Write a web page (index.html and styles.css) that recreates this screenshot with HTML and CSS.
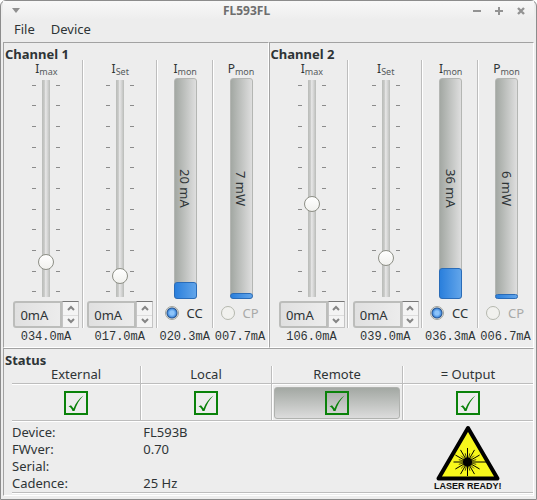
FILE: index.html
```html
<!DOCTYPE html>
<html lang="en">
<head>
<meta charset="utf-8">
<title>FL593FL</title>
<link rel="stylesheet" href="styles.css">
</head>
<body>
<div class="window">
  <header class="titlebar">
    <button class="win-btn" aria-label="Window menu"><svg width="8" height="5" viewBox="0 0 8 5"><path d="M0 0h8L4 5z" fill="#8f8f8f"/></svg></button>
    <h1>FL593FL</h1>
    <div class="win-actions">
      <button class="win-btn" aria-label="Minimize"><svg width="8" height="8" viewBox="0 0 8 8"><path d="M0 4h8" stroke="#939393" stroke-width="2"/></svg></button>
      <button class="win-btn" aria-label="Maximize"><svg width="8" height="8" viewBox="0 0 8 8"><path d="M0 4h8M4 0v8" stroke="#939393" stroke-width="2"/></svg></button>
      <button class="win-btn" aria-label="Close"><svg width="8" height="8" viewBox="0 0 8 8"><path d="M1 1l6 6M7 1L1 7" stroke="#939393" stroke-width="2.4"/></svg></button>
    </div>
  </header>
  <nav class="menubar">
    <button>File</button>
    <button>Device</button>
  </nav>
  <main>
    <div class="channels" id="channels"></div>
    <section class="panel status">
      <h2>Status</h2>
      <div class="sources">
        <div class="source"><h3>External</h3><div class="cell"><button class="toggle" aria-label="External"></button></div></div>
        <div class="source"><h3>Local</h3><div class="cell"><button class="toggle" aria-label="Local"></button></div></div>
        <div class="source"><h3>Remote</h3><div class="cell"><button class="toggle pressed" aria-label="Remote" aria-pressed="true"></button></div></div>
        <div class="source"><h3>= Output</h3><div class="cell"><button class="toggle" aria-label="Output"></button></div></div>
      </div>
      <div class="info">
        <dl>
          <dt>Device:</dt><dd>FL593B</dd>
          <dt>FWver:</dt><dd>0.70</dd>
          <dt>Serial:</dt><dd></dd>
          <dt>Cadence:</dt><dd>25 Hz</dd>
        </dl>
        <figure class="laser">
          <svg width="66" height="56" viewBox="0 0 66 56">
            <path d="M33 3L62.5 53.5H3.5z" fill="#f7f71c" stroke="#000" stroke-width="4" stroke-linejoin="round"/>
            <g id="rays" stroke="#000"></g>
            <circle cx="32.5" cy="37" r="4.6" fill="#000"/>
          </svg>
          <figcaption>LASER READY!</figcaption>
        </figure>
      </div>
    </section>
  </main>
</div>
<script src="app.js"></script>
</body>
</html>
```
FILE: styles.css
```css
* { box-sizing: border-box; }
body {
  margin: 0;
  background: #fff;
  color: #2e3436;
  font: 13px/16px "Noto Sans", "Open Sans", sans-serif;
}
h1, h2, h3, dl, dd, figure { margin: 0; }
button, input { font: inherit; color: inherit; }
button { border: 0; padding: 0; background: none; }
svg { display: block; }

.window {
  min-height: 100vh;
  padding: 0 2px 2px;
  border: 1px solid #8c8c8c;
  border-radius: 6px 6px 0 0;
  background: #ededed;
}
.titlebar {
  display: flex;
  align-items: center;
  height: 19px;
  padding: 0 9px;
  background: linear-gradient(#f8f8f8, #ededed);
}
.titlebar h1 { flex: 1; text-align: center; font-size: 12px; line-height: 16px; color: #6e6e6e; }
.win-actions { display: flex; justify-content: flex-end; gap: 14px; }
.menubar { display: flex; gap: 16px; height: 22px; padding: 0 11px; }
.menubar button { height: 18px; }

.channels { display: grid; grid-template-columns: 1fr 1fr; }
.panel {
  border: 1px solid;
  border-color: #a2a2a2 #fff #fff #a2a2a2;
}
.panel h2 { font-size: 13px; line-height: 14px; padding-left: 1px; }
.channel { height: 306px; padding-top: 4px; }
.meters {
  display: grid;
  grid-template-columns: 74fr 74fr 56fr 55fr;
  margin-top: -1px;
  padding-left: 5px;
}
.meter { display: flex; flex-direction: column; align-items: center; }
.body {
  display: flex;
  flex-direction: column;
  align-items: center;
  align-self: stretch;
  height: 268px;
  padding-left: 2px;
  border-right: 1px solid #bdbdbd;
  box-shadow: 1px 0 #fff;
}
.meter:last-child .body { border: 0; box-shadow: none; }
.name { height: 17px; font-size: 12px; line-height: 18px; }
.name sub { font-size: 9px; line-height: 1px; vertical-align: -2px; color: #555a5c; }

.scale { display: flex; gap: 6px; height: 223px; align-items: center; }
.ticks { display: flex; flex-direction: column; justify-content: space-between; height: 208px; }
.ticks i { width: 4px; height: 1px; background: #8b8b8b; }
.slider {
  appearance: none;
  writing-mode: vertical-lr;
  direction: rtl;
  width: 16px;
  height: 223px;
  margin: 0 -4px;
  background: transparent;
}
.slider::-webkit-slider-runnable-track {
  width: 8px;
  border-radius: 4px;
  background: linear-gradient(90deg, #b9bbb8, #c9cac8 30%, #e6e6e6 45%, #dcdcdc 60%, #b9bbb8) center / 8px 217px no-repeat;
}
.slider::-webkit-slider-thumb {
  appearance: none;
  width: 16px;
  height: 16px;
  margin-left: -4px;
  border: 1px solid #8d8f86;
  border-radius: 50%;
  background: linear-gradient(#fff, #f1f1ee);
}
.bar {
  position: relative;
  display: flex;
  flex-direction: column;
  justify-content: flex-end;
  width: 23px;
  height: 221px;
  margin-top: 1px;
  border: 1px solid #b4b6b3;
  border-radius: 3px;
  background: linear-gradient(90deg, #a3a8a3, #dedede);
}
.fill {
  margin: -1px;
  border: 1px solid #2a6cb8;
  border-radius: 3px;
  background: linear-gradient(90deg, #2a7fdc, #62a5ea);
}
.reading {
  position: absolute;
  inset: 0;
  display: flex;
  align-items: center;
  justify-content: center;
  writing-mode: vertical-rl;
}
.spin { display: flex; height: 27px; width: 66px; margin-top: 1px; }
.spin input {
  width: 49px;
  padding: 0 5px;
  border: 2px solid #bcbdbb;
  border-radius: 3px 0 0 3px;
  background: linear-gradient(90deg, #e0e0e0, #ececec);
}
.steps { display: grid; grid-template-rows: 1fr 1fr; width: 17px; border: 1px solid #c4c4c4; border-top-color: #777; background: #f4f4f4; }
.steps button { display: grid; place-items: center; }
.steps button + button { border-top: 1px solid #ddd; }
.mode { display: flex; align-items: center; gap: 8px; height: 27px; padding-right: 3px; }
.mode input {
  appearance: none;
  width: 14px;
  height: 14px;
  margin: 0;
  border: 1px solid #b5b8ae;
  border-radius: 50%;
  background: #f1f1ee;
}
.mode input:checked { border-color: #a2a49c; background: radial-gradient(circle, #8cc4fa 0 2px, #4a92e2 4px, #24508a 5px, #ecebe6 6px); }
.mode.off { color: #a9aaa8; }
.value { font: 12px/18px "Liberation Mono", monospace; }

.status { height: 148px; padding: 4px 0 0; }
.sources { display: grid; grid-template-columns: 129fr 131fr 131fr 130fr; margin: -1px 0 0 8px; }
.source { border-right: 1px solid #bdbdbd; box-shadow: 1px 0 #fff; }
.source:last-child { border: 0; box-shadow: none; }
.source h3 { height: 17px; font-size: 13px; line-height: 17px; font-weight: 400; text-align: center; }
.cell { height: 38px; padding: 3px 2px 1px; border: solid #bdbdbd; border-width: 1px 0; box-shadow: inset 0 1px #fff; }
.toggle { display: grid; place-items: center; width: 100%; height: 32px; border-radius: 3px; }
.toggle.pressed { border: 1px solid #b0b2af; background: linear-gradient(#a3a8a3, #dcdcdc); }
.info {
  display: grid;
  grid-template-columns: 3fr 1fr;
  margin-left: 8px;
  padding-top: 3px;
  border-bottom: 1px solid #bdbdbd;
  box-shadow: 0 1px #fff, inset 0 1px #fff;
}
.info dl { display: grid; grid-template-columns: 1fr 2fr; line-height: 17px; grid-auto-rows: 17px; }
.info dd { padding-left: 1px; }
.laser { display: flex; flex-direction: column; align-items: center; padding-top: 1px; }
.laser figcaption { font: bold 9px/10px "Liberation Sans", sans-serif; color: #111; white-space: nowrap; }
```
FILE: app.js
```js
const channels = [
  { title: "Channel 1", sliders: [["max", 30, "034.0mA"], ["Set", 16, "017.0mA"]],
    bars: [["I", 17, "20 mA", "CC", "020.3mA"], ["P", 6, "7 mW", "CP", "007.7mA"]] },
  { title: "Channel 2", sliders: [["max", 88, "106.0mA"], ["Set", 34, "039.0mA"]],
    bars: [["I", 31, "36 mA", "CC", "036.3mA"], ["P", 5, "6 mW", "CP", "006.7mA"]] }
];
const ticks = `<span class="ticks">${"<i></i>".repeat(11)}</span>`;
const arrow = d => `<svg width="8" height="6" viewBox="0 0 8 6"><path d="${d}" fill="none" stroke="#858585" stroke-width="2"/></svg>`;

document.getElementById("channels").innerHTML = channels.map((c, n) => `
  <section class="panel channel"><h2>${c.title}</h2><div class="meters">
  ${c.sliders.map(([name, v, text]) => `
    <div class="meter"><div class="body">
      <label class="name" for="s${n}${name}">I<sub>${name}</sub></label>
      <div class="scale">${ticks}<input class="slider" id="s${n}${name}" type="range" min="0" max="207" value="${v}">${ticks}</div>
      <div class="spin"><input type="text" value="0mA" aria-label="I ${name} setpoint">
        <div class="steps"><button aria-label="Increase">${arrow("M1 5l3-3 3 3")}</button><button aria-label="Decrease">${arrow("M1 1l3 3 3-3")}</button></div></div>
    </div><output class="value">${text}</output></div>`).join("")}
  ${c.bars.map(([name, h, reading, mode, text]) => `
    <div class="meter"><div class="body">
      <span class="name">${name}<sub>mon</sub></span>
      <div class="bar"><div class="fill" style="height:${h}px"></div><span class="reading">${reading}</span></div>
      <label class="mode ${mode === "CP" ? "off" : ""}"><input type="radio" name="mode${n}" ${mode === "CC" ? "checked" : "disabled"}>${mode}</label>
    </div><output class="value">${text}</output></div>`).join("")}
  </div></section>`).join("");

for (const b of document.querySelectorAll(".toggle")) {
  b.innerHTML = `<svg width="24" height="24" viewBox="0 0 24 24"><rect x="1" y="1" width="22" height="22" fill="none" stroke="#0a820a" stroke-width="2"/><path d="M4.5 15.500l2.500-1.200 2.500 3.200C12 11.500 15 7.500 19.500 4.500 15.500 8.500 12.500 13.500 10.500 20H8.500C7.500 17.500 6.500 15.800 4.500 15.500z" fill="#0a820a"/></svg>`;
}

document.getElementById("rays").innerHTML = Array.from({ length: 24 }, (_, i) => {
  const a = i * Math.PI / 12;
  const r = i === 0 ? 21 : i % 2 === 0 ? 14 : 9;
  const w = i % 2 === 0 ? 1 : 0.7;
  return `<line x1="32.5" y1="37" x2="${32.5 + r * Math.cos(a)}" y2="${37 + r * Math.sin(a)}" stroke-width="${w}"/>`;
}).join("");
```
